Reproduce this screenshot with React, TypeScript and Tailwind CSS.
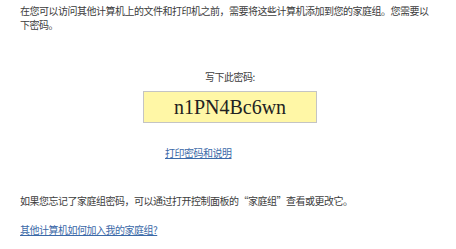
export default function App() {
  const cjk = { fontFamily: '"Noto Sans CJK SC", "Noto Sans", sans-serif' };

  return (
    <div className="w-[456px] h-[249px] bg-white pl-[20px] pt-[4px] text-[#3c3c3c] tracking-[-0.5px]" style={cjk}>
      {/* Intro */}
      <p className="w-[420px] text-[10px] leading-[14px]">
        在您可以访问其他计算机上的文件和打印机之前，需要将这些计算机添加到您的家庭组。您需要以
        <br />
        下密码。
      </p>

      {/* Password block */}
      <div className="w-[420px] flex flex-col items-center mt-[38px]">
        <p className="text-[10px] leading-[14px]">写下此密码:</p>
        <div className="mt-[7px] w-[174px] h-[32px] flex items-center justify-center bg-[#fff7a6] border border-[#c4c4c4]">
          <span className="text-[20px] leading-none tracking-normal text-[#222] font-['Liberation_Serif',serif]">n1PN4Bc6wn</span>
        </div>
      </div>

      <a href="#" className="block w-fit mt-[23px] ml-[145px] text-[10px] leading-[14px] text-[#3b69a8] underline">
        打印密码和说明
      </a>

      <p className="mt-[34px] text-[10px] leading-[14px]">
        如果您忘记了家庭组密码，可以通过打开控制面板的“家庭组”查看或更改它。
      </p>

      <a href="#" className="block w-fit mt-[15px] text-[10px] leading-[14px] text-[#3b69a8] underline">
        其他计算机如何加入我的家庭组?
      </a>
    </div>
  );
}
